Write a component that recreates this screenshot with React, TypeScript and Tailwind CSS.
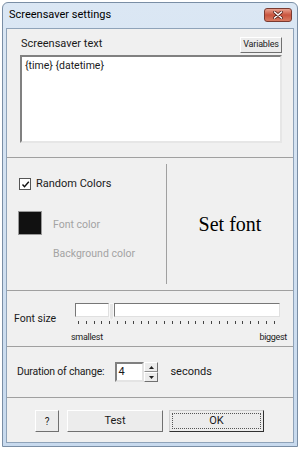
import React from "react";

const ticks = Array.from({ length: 26 });

const raised = "border border-t-white border-l-white border-r-[#707070] border-b-[#707070] bg-[#ececec]";

export default function App() {
  return (
    <div className="w-[300px] h-[450px] bg-white pt-[2px] px-[2px]" style={{ fontFamily: 'Roboto, "Liberation Sans", Arial, sans-serif' }}>
      <div className="h-[445px] rounded-t-[6px] border border-[#7a8ea5] bg-gradient-to-b from-[#dbe7f4] to-[#c8daee] flex flex-col px-[3px] pb-[3px]">
        {/* Title bar */}
        <div className="h-[25px] flex items-center justify-between pl-[3px] pr-[2px] shrink-0">
          <span className="text-[11px] text-black">Screensaver settings</span>
          <div className="w-[28px] h-[14px] rounded-[3px] border border-[#7a3a30] bg-gradient-to-b from-[#e8a190] via-[#c9543e] to-[#d87b62] flex items-center justify-center -mt-[2px]">
            <svg width="10" height="8" viewBox="0 0 10 8">
              <path d="M1.5 1 L8.5 7 M8.5 1 L1.5 7" stroke="#5a2018" strokeWidth="3" strokeLinecap="round" />
              <path d="M1.5 1 L8.5 7 M8.5 1 L1.5 7" stroke="#ffffff" strokeWidth="1.6" strokeLinecap="round" />
            </svg>
          </div>
        </div>
        {/* Content */}
        <div className="flex-1 border border-[#8fa3b9] bg-[#f0f0f0] flex flex-col text-[10.5px] text-[#1a1a1a]">
          {/* Section 1 */}
          <div className="h-[129px] border-b border-[#a0a0a0] pl-[13px] pr-[11px] pt-[8px] shrink-0">
            <div className="flex items-center justify-between h-[16px]">
              <span className="text-[11px] pl-[1px] -mt-[2px]">Screensaver text</span>
              <div className={`${raised} shrink-0 h-[16px] w-[42px] text-[9px] tracking-[-0.2px] flex items-center justify-center`}>Variables</div>
            </div>
            <div className="mt-[2px] h-[88px] bg-white border-[2px] border-t-[#808080] border-l-[#808080] border-r-[#e6e6e6] border-b-[#e6e6e6] px-[3px] pt-[1px] text-[10.5px]">
              {"{time} {datetime}"}
            </div>
          </div>
          {/* Section 2 */}
          <div className="h-[133px] border-b border-[#a0a0a0] flex shrink-0">
            <div className="w-[159px] pl-[12px] pt-[20px]">
              <div className="flex items-center gap-[5px] h-[12px]">
                <div className="w-[12px] h-[12px] bg-white border border-[#555] flex items-center justify-center">
                  <svg width="9" height="9" viewBox="0 0 9 9">
                    <path d="M1.5 4.5 L3.5 6.8 L7.8 1.8" stroke="#111" strokeWidth="1.4" fill="none" />
                  </svg>
                </div>
                <span className="text-[11px]">Random Colors</span>
              </div>
              <div className="mt-[21px] -ml-[1px] flex">
                <div className="w-[24px] h-[24px] border border-[#999] bg-[#111]" />
                <div className="ml-[11px] text-[#a3a3a3] flex flex-col leading-[14px]">
                  <span className="mt-[7px]">Font color</span>
                  <span className="mt-[15px]">Background color</span>
                </div>
              </div>
            </div>
            <div className="my-[6px] w-[1px] bg-[#a0a0a0]" />
            <div className="flex-1 flex items-center justify-center">
              <span className="text-[20px] text-black" style={{ fontFamily: '"Liberation Serif", "DejaVu Serif", serif' }}>Set font</span>
            </div>
          </div>
          {/* Section 3 */}
          <div className="h-[56px] border-b border-[#a0a0a0] pl-[7px] flex shrink-0">
            <span className="mt-[20px] w-[61px] shrink-0 text-[10.5px]">Font size</span>
            <div className="w-[205px] flex flex-col pt-[12px]">
              <div className="flex items-start h-[18px]">
                <div className="w-[34px] h-[14px] bg-white border border-t-[#777] border-l-[#777] border-r-[#e0e0e0] border-b-[#e0e0e0]" />
                <svg width="5" height="18" viewBox="0 0 5 18" className="shrink-0">
                  <path d="M0.5 0.5 H4.5 V15 L2.5 17.5 L0.5 15 Z" fill="#e6e6e6" stroke="#f8f8f8" />
                </svg>
                <div className="flex-1 h-[14px] bg-white border border-t-[#777] border-l-[#777] border-r-[#e0e0e0] border-b-[#e0e0e0]" />
              </div>
              <div className="flex justify-between px-[3px] mr-[2px]">
                {ticks.map((_, i) => (
                  <div key={i} className="w-[1px] h-[3px] bg-[#444]" />
                ))}
              </div>
              <div className="flex justify-between mt-[7px] text-[9px] -ml-[4px] -mr-[7px] tracking-[-0.3px] leading-[12px]">
                <span>smallest</span>
                <span>biggest</span>
              </div>
            </div>
          </div>
          {/* Section 4 */}
          <div className="h-[51px] border-b border-[#a0a0a0] pl-[10px] flex items-center shrink-0">
            <span className="text-[10.5px] tracking-[-0.2px]">Duration of change:</span>
            <div className="ml-[11px] flex">
              <div className="w-[29px] h-[20px] bg-white border-[2px] border-t-[#808080] border-l-[#808080] border-r-[#e4e4e4] border-b-[#e4e4e4] pl-[1px] text-[11px] leading-[16px]">4</div>
              <div className="w-[14px] h-[20px] flex flex-col">
                <div className="h-[10px] border border-t-white border-l-white border-r-[#707070] border-b-[#909090] bg-[#ececec] flex items-center justify-center">
                  <svg width="5" height="3" viewBox="0 0 5 3"><path d="M2.5 0 L5 3 L0 3 Z" fill="#222" /></svg>
                </div>
                <div className={`${raised} h-[10px] flex items-center justify-center`}>
                  <svg width="5" height="3" viewBox="0 0 5 3"><path d="M0 0 L5 0 L2.5 3 Z" fill="#222" /></svg>
                </div>
              </div>
            </div>
            <span className="ml-[12px] text-[11px]">seconds</span>
          </div>
          {/* Section 5 */}
          <div className="flex-1 flex items-start pt-[12px] pl-[28px]">
            <div className={`${raised} w-[24px] h-[22px] flex items-center justify-center text-[10px]`}>?</div>
            <div className={`${raised} ml-[8px] w-[96px] h-[22px] flex items-center justify-center text-[11px]`}>Test</div>
            <div className="ml-[6px] w-[95px] h-[22px] border border-t-[#d0d0d0] border-l-[#d0d0d0] border-r-[#303030] border-b-[#303030] bg-[#ececec] p-[2px]">
              <div className="w-full h-full border border-dotted border-[#555] flex items-center justify-center text-[11px]">OK</div>
            </div>
          </div>
        </div>
      </div>
    </div>
  );
}
